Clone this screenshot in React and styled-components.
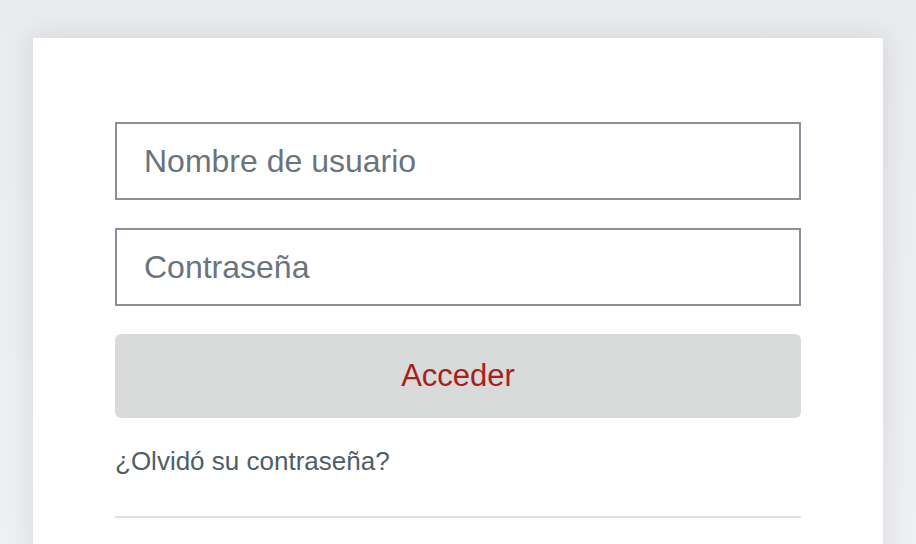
import React from 'react';
import styled, { createGlobalStyle } from 'styled-components';

const Global = createGlobalStyle`
	html, body {
		margin: 0;
		padding: 0;
		background: #eceef1;
		font-family: 'Liberation Sans', Arial, sans-serif;
	}
`;

const Page = styled.div`
	width: 916px;
	height: 544px;
	overflow: hidden;
	padding: 38px 33px 0 33px;
	box-sizing: border-box;
	background: linear-gradient(180deg, #e9ebee 0%, #eef0f3 100%);
`;

const Card = styled.div`
	background: #ffffff;
	box-shadow: 0 0 24px 4px rgba(0, 0, 0, 0.08);
	padding: 84px 82px 40px 82px;
	height: 600px;
	box-sizing: border-box;
`;

const Form = styled.form`
	display: flex;
	flex-direction: column;
	gap: 28px;
`;

const Field = styled.input`
	height: 78px;
	box-sizing: border-box;
	border: 2px solid #8e9099;
	border-radius: 0;
	padding: 0 27px;
	font-family: 'Liberation Sans', Arial, sans-serif;
	font-size: 32px;
	color: #333;
	outline: none;
	&::placeholder {
		color: #6b737b;
	}
`;

const Submit = styled.button`
	height: 84px;
	border: none;
	border-radius: 6px;
	background: #d9dbdb;
	color: #a8201a;
	font-family: 'Liberation Sans', Arial, sans-serif;
	font-size: 31px;
	cursor: pointer;
`;

const Forgot = styled.a`
	display: block;
	margin-top: 28px;
	font-size: 26px;
	line-height: 30px;
	color: #4f5d66;
	text-decoration: none;
`;

const Divider = styled.hr`
	margin: 40px 0 0 0;
	border: none;
	border-top: 2px solid #dde1e5;
`;

const App = () => (
	<>
		<Global />
		<Page>
			<Card>
				<Form onSubmit={e => e.preventDefault()}>
					<Field type="text" placeholder="Nombre de usuario" />
					<Field type="password" placeholder="Contraseña" />
					<Submit type="submit">Acceder</Submit>
				</Form>
				<Forgot href="#">¿Olvidó su contraseña?</Forgot>
				<Divider />
			</Card>
		</Page>
	</>
);

export default App;
